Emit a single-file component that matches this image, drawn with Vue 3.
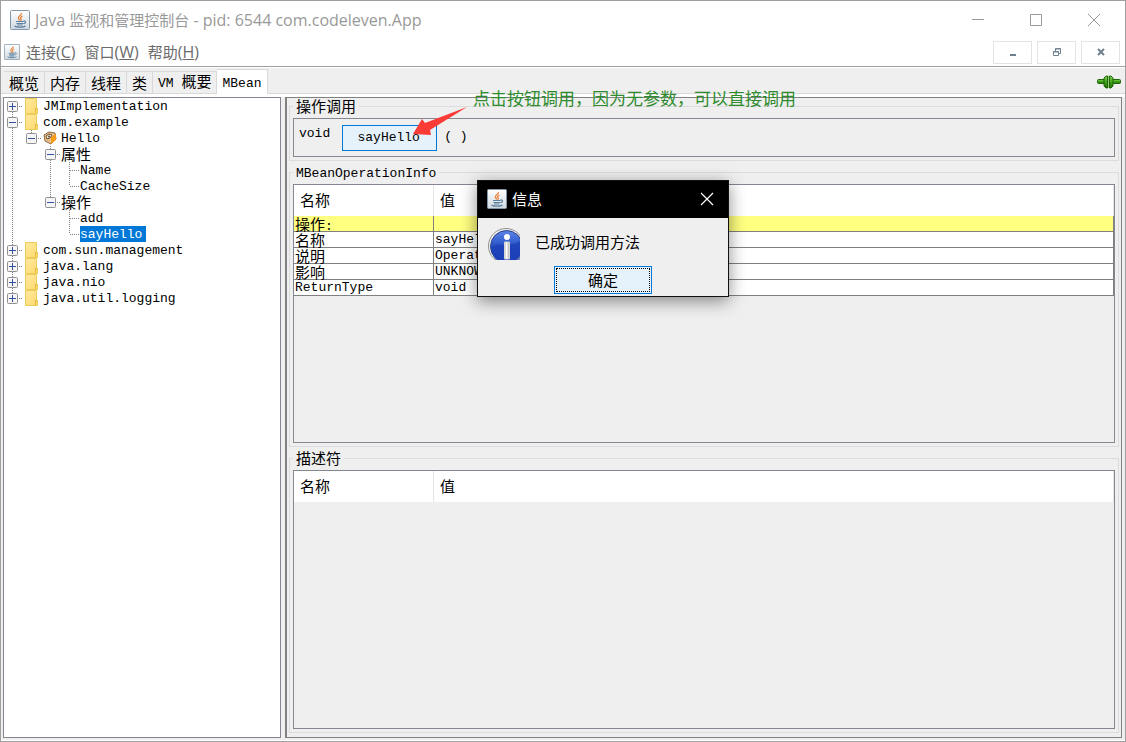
<script setup>
import { ref } from 'vue';

const menus = ref([
  { label: "连接", key: "C" },
  { label: "窗口", key: "W" },
  { label: "帮助", key: "H" }
]);

const tabs = ref([
  { zh: "概览" }, { zh: "内存" }, { zh: "线程" }, { zh: "类" },
  { en: "VM ", zh: "概要" }, { en: "MBean" }
]);
const activeTab = ref(5);

// cells: F = first, T = branch, L = last branch, I = line, _ = empty
const nodes = ref([
  { name: "JMImplementation", cells: "F", box: "+", icon: "folder" },
  { name: "com.example", cells: "T", box: "-", icon: "folder" },
  { name: "Hello", cells: "IL", box: "-", icon: "bean" },
  { name: "属性", cells: "I_T", box: "-", zh: true },
  { name: "Name", cells: "I_IT" },
  { name: "CacheSize", cells: "I_IL" },
  { name: "操作", cells: "I_L", box: "-", zh: true },
  { name: "add", cells: "I__T" },
  { name: "sayHello", cells: "I__L" },
  { name: "com.sun.management", cells: "T", box: "+", icon: "folder" },
  { name: "java.lang", cells: "T", box: "+", icon: "folder" },
  { name: "java.nio", cells: "T", box: "+", icon: "folder" },
  { name: "java.util.logging", cells: "L", box: "+", icon: "folder" }
]);
const selectedNode = ref("sayHello");

const lines = {
  F: "M8.5 8V16M9 8.5H19",
  T: "M8.5 0V16M9 8.5H19",
  L: "M8.5 0V8M9 8.5H19",
  I: "M8.5 0V16",
  _: ""
};

const info = ref([
  { name: "名称", value: "sayHello", zh: true },
  { name: "说明", value: "Operation exposed for management", zh: true },
  { name: "影响", value: "UNKNOWN", zh: true },
  { name: "ReturnType", value: "void" }
]);

const showDialog = ref(true);
</script>

<template>
  <div class="window">
    <svg class="symbols" width="0" height="0" aria-hidden="true">
      <defs>
        <linearGradient id="cupBg" x1="0" y1="0" x2="0" y2="1">
          <stop offset="0" stop-color="#ffffff" />
          <stop offset="1" stop-color="#cfd9e0" />
        </linearGradient>
        <linearGradient id="infoBlue" x1="0" y1="0" x2="0" y2="1">
          <stop offset="0" stop-color="#5d86e8" />
          <stop offset="0.5" stop-color="#2450c4" />
          <stop offset="1" stop-color="#1c3fc4" />
        </linearGradient>
        <linearGradient id="infoStem" x1="0" y1="0" x2="1" y2="0">
          <stop offset="0" stop-color="#b4b4b4" />
          <stop offset="0.4" stop-color="#ffffff" />
          <stop offset="1" stop-color="#a8a8a8" />
        </linearGradient>
        <linearGradient id="plugGreen" x1="0" y1="0" x2="0" y2="1">
          <stop offset="0" stop-color="#86d45a" />
          <stop offset="0.5" stop-color="#3fa516" />
          <stop offset="1" stop-color="#1f7006" />
        </linearGradient>
        <linearGradient id="folderYellow" x1="0" y1="0" x2="1" y2="1">
          <stop offset="0" stop-color="#ffeaa0" />
          <stop offset="1" stop-color="#fbd96c" />
        </linearGradient>
        <symbol id="java" viewBox="0 0 20 20">
          <rect x="0.5" y="0.5" width="19" height="19" rx="1" fill="url(#cupBg)" stroke="#8296a6" />
          <path d="M11.5 3C12 5 8 6 8.4 8C8.6 9 9.5 9.5 9.5 10.5M12.5 6C10.5 7 10 8 11 9C11.5 9.6 11 10.3 10.5 10.7" fill="none" stroke="#e8833a" stroke-width="1.3" />
          <path d="M6 11.5H13.5M6.5 13.5H13M7 15H12.5M13.5 11C16.5 10.5 16 13.5 13.3 13.6M4.5 16C6 17.5 14 17.5 15.5 16" fill="none" stroke="#5b7f9e" stroke-width="1.2" />
        </symbol>
      </defs>
    </svg>

    <header class="title-bar">
      <svg class="app-icon"><use href="#java" /></svg>
      <h1>Java <span>监视和管理控制台</span> - pid: 6544 com.codeleven.App</h1>
      <div class="win-buttons">
        <button aria-label="最小化"><svg width="14" height="14"><path d="M1 6.5H13" /></svg></button>
        <button aria-label="最大化"><svg width="14" height="14"><path d="M1.5 1.5H12.5V12.5H1.5Z" /></svg></button>
        <button aria-label="关闭"><svg width="14" height="14"><path d="M1 1L13 13M13 1L1 13" /></svg></button>
      </div>
    </header>

    <nav class="menu-bar">
      <svg class="menu-icon"><use href="#java" /></svg>
      <button v-for="menu in menus" :key="menu.key" class="menu"><span>{{ menu.label }}</span>(<u>{{ menu.key }}</u>)</button>
      <div class="frame-buttons">
        <button aria-label="最小化内部窗口"><svg width="10" height="10"><path d="M2 8H8" stroke="#70808f" stroke-width="2" /></svg></button>
        <button aria-label="还原内部窗口"><svg width="10" height="10"><path d="M3.5 4V1.5H8.5V6.5H7M3 2H9M1.5 4.5H6.5V8.5H1.5ZM1 5H7" fill="none" stroke="#70808f" /></svg></button>
        <button aria-label="关闭内部窗口"><svg width="10" height="10"><path d="M2 2L8 8M8 2L2 8" stroke="#70808f" stroke-width="2" /></svg></button>
      </div>
    </nav>

    <div class="tab-bar">
      <button
        v-for="(tab, i) in tabs"
        :key="i"
        class="tab"
        :class="{ active: i === activeTab }"
        @click="activeTab = i"
      ><span v-if="tab.en" class="latin">{{ tab.en }}</span>{{ tab.zh }}</button>
      <svg class="plug" width="24" height="14" viewBox="0 0 24 14">
        <rect x="0.5" y="4.5" width="23" height="4" rx="1" fill="url(#plugGreen)" stroke="#21640b" />
        <path d="M7 3L9 1H10.5V13H9L7 11ZM16 3L14 1H12.5V13H14L16 11Z" fill="url(#plugGreen)" stroke="#21640b" />
        <path d="M11.5 1V13" stroke="#8fce6e" />
      </svg>
    </div>

    <main class="content">
      <aside class="tree">
        <div v-for="node in nodes" :key="node.name" class="node">
          <svg v-for="(cell, i) in node.cells" :key="i" class="cell" width="19" height="16">
            <path :d="lines[cell]" fill="none" stroke="#808080" stroke-dasharray="1 1" />
            <g v-if="node.box && i === node.cells.length - 1">
              <rect x="3.5" y="3.5" width="10" height="10" rx="1" fill="#f5f5f5" stroke="#919191" />
              <path d="M5 8.5H12" stroke="#35509c" />
              <path v-if="node.box === '+'" d="M8.5 5V12" stroke="#35509c" />
            </g>
          </svg>
          <svg v-if="node.icon === 'folder'" class="folder" width="14" height="16">
            <path d="M0.5 0.5H11.5V10.5H12.5V15.5H0.5Z" fill="url(#folderYellow)" stroke="#eccb58" />
            <path d="M10.5 15V10.5H12.5" fill="none" stroke="#dfb93b" />
          </svg>
          <svg v-if="node.icon === 'bean'" class="bean" width="14" height="16">
            <path d="M1 5L6 2L12 3L13 9L8 14L2 11Z" fill="#e9c08a" stroke="#8a6a44" />
            <path d="M8 7L13 4V10L8 14Z" fill="#f59b16" />
            <path d="M3 6L6 4L9 5L7 8L4 9Z" fill="#f8ead2" stroke="#6d5335" />
            <circle cx="6" cy="6.5" r="1" fill="#5e4a38" />
          </svg>
          <button
            class="node-name"
            :class="{ latin: !node.zh, selected: node.name === selectedNode }"
            @click="selectedNode = node.name"
          >{{ node.name }}</button>
        </div>
      </aside>

      <section class="details">
        <fieldset class="group">
          <legend>操作调用</legend>
          <div class="call latin">
            <span class="return-type">void</span>
            <button class="invoke latin" @click="showDialog = true">sayHello</button>
            <span class="parens">( )</span>
          </div>
        </fieldset>

        <fieldset class="group fill">
          <legend class="latin">MBeanOperationInfo</legend>
          <div class="table-box">
            <table>
              <thead>
                <tr><th class="name-col">名称</th><th>值</th></tr>
              </thead>
              <tbody>
                <tr class="heading"><td>操作<span class="latin">:</span></td><td></td></tr>
                <tr v-for="row in info" :key="row.name">
                  <td :class="{ latin: !row.zh }">{{ row.name }}</td>
                  <td class="latin">{{ row.value }}</td>
                </tr>
              </tbody>
            </table>
          </div>
        </fieldset>

        <fieldset class="group fill">
          <legend>描述符</legend>
          <div class="table-box">
            <table>
              <thead>
                <tr><th class="name-col">名称</th><th>值</th></tr>
              </thead>
            </table>
          </div>
        </fieldset>
      </section>
    </main>

    <p class="note">点击按钮调用，因为无参数，可以直接调用</p>
    <svg class="arrow" width="54" height="30"><path d="M0 27L9 12L12 16L54 0L17 23L18 28Z" fill="#fb3b36" /></svg>

    <div v-if="showDialog" class="dialog" role="dialog" aria-labelledby="dialogTitle">
      <div class="dialog-title">
        <svg class="app-icon"><use href="#java" /></svg>
        <span id="dialogTitle">信息</span>
        <button class="dialog-close" aria-label="关闭" @click="showDialog = false">
          <svg width="14" height="14"><path d="M1 1L13 13M13 1L1 13" stroke="#fff" stroke-width="1.2" /></svg>
        </button>
      </div>
      <div class="message">
        <svg width="32" height="32" viewBox="0 0 32 32">
          <circle cx="18" cy="18" r="17.5" fill="#f4f4f4" stroke="#8d8d8d" />
          <circle cx="18.5" cy="18.5" r="16" fill="url(#infoBlue)" stroke="#2a3f86" />
          <path d="M4 19C8 14 22 20 32 13V32H8Q3 26 4 19Z" fill="#1a3cb4" opacity="0.6" />
          <circle cx="19" cy="9" r="3" fill="#fff" />
          <path d="M16.5 14H21.5V31H16.5Z" fill="url(#infoStem)" stroke="#d5d5d5" />
        </svg>
        <span>已成功调用方法</span>
      </div>
      <button class="ok" @click="showDialog = false"><span>确定</span></button>
    </div>
  </div>
</template>

<style>
body {
  margin: 0;
  background-color: #efefef;
}
</style>

<style scoped>
* {
  box-sizing: border-box;
}

.window {
  position: relative;
  display: flex;
  flex-direction: column;
  min-height: 100vh;
  border: 1px solid #a0a0a0;
  background-color: #efefef;
  color: #000;
  font-family: "Noto Sans CJK SC", sans-serif;
  font-size: 15px;
  line-height: 16px;
}

button {
  padding: 0;
  border: none;
  background: none;
  color: inherit;
  font: inherit;
}

svg {
  display: block;
  flex: none;
}

.symbols {
  position: absolute;
}

.latin {
  font-family: "Liberation Mono", "Noto Sans CJK SC", monospace;
  font-size: 13px;
}

.title-bar {
  display: flex;
  align-items: center;
  height: 37px;
  padding: 0 2px 0 9px;
  background-color: #fff;
  color: #999;
}

.app-icon {
  width: 20px;
  height: 20px;
}

h1 {
  flex: 1;
  margin: 0 0 0 5px;
  font-family: "Open Sans", "Noto Sans CJK SC", sans-serif;
  font-size: 16px;
  font-weight: normal;
  white-space: nowrap;
}

h1 span,
.menu span {
  font-size: 15px;
}

.win-buttons {
  display: flex;
}

.win-buttons button {
  display: grid;
  place-items: center;
  width: 58px;
  height: 36px;
}

.win-buttons path {
  fill: none;
  stroke: #999;
}

.menu-bar {
  display: flex;
  align-items: center;
  gap: 9px;
  height: 29px;
  padding: 0 5px 0 3px;
  border-bottom: 1px solid #a0a0a0;
  background-color: #fff;
  color: #6b6b6b;
  font-family: "Open Sans", "Noto Sans CJK SC", sans-serif;
  font-size: 16px;
}

.menu-icon {
  width: 16px;
  height: 16px;
  margin-right: -3px;
}

.frame-buttons {
  display: flex;
  gap: 5px;
  margin-left: auto;
}

.frame-buttons button {
  display: grid;
  place-items: center;
  width: 39px;
  height: 23px;
  border: 1px solid #e3e3e3;
}

/* tabs */
.tab-bar {
  display: flex;
  align-items: flex-end;
  height: 30px;
  padding: 0 4px 0 3px;
  border-top: 1px solid #fff;
  border-bottom: 3px solid #fff;
  box-shadow: inset 0 -1px #d9d9d9;
}

.tab {
  height: 22px;
  padding: 0 5px;
  margin-bottom: 1px;
  border-top: 1px solid #d9d9d9;
  border-right: 1px solid #d9d9d9;
  white-space: pre;
}

.tab.active {
  height: 25px;
  margin-bottom: 0;
  background-color: #fff;
}

.plug {
  margin: 0 0 5px auto;
}

/* content */
.content {
  display: flex;
  flex: 1;
  gap: 4px;
  padding: 0 3px 2px 2px;
  border-bottom: 1px solid #fff;
}

.tree {
  flex: none;
  width: 278px;
  border: 1px solid #828790;
  background-color: #fff;
}

.node {
  display: flex;
  align-items: center;
  height: 16px;
}

.folder {
  margin: 0 4px 0 2px;
}

.bean {
  margin: 0 4px 0 1px;
}

.node-name {
  height: 16px;
  line-height: 14px;
}

.node-name.latin {
  line-height: 18px;
}

.node-name.selected {
  padding-right: 4px;
  background-color: #0078d7;
  color: #fff;
}

.details {
  display: flex;
  flex: 1;
  flex-direction: column;
  gap: 3px;
  min-width: 0;
  padding: 0 2px 4px;
  border: 1px solid #828282;
  border-left-width: 2px;
}

.group {
  display: flex;
  flex-direction: column;
  min-width: 0;
  margin: 0;
  padding: 3px;
  border: 1px solid #dcdcdc;
}

.group.fill {
  flex: 1;
}

legend {
  height: 17px;
  padding: 0 3px;
  line-height: 15px;
}

legend.latin {
  line-height: 19px;
}

.call {
  display: flex;
  align-items: flex-start;
  height: 39px;
  padding: 6px 5px;
  border: 1px solid #828790;
}

.return-type {
  line-height: 18px;
}

.invoke {
  width: 95px;
  height: 26px;
  padding-right: 2px;
  margin: 0 7px 0 12px;
  border: 1px solid #0078d7;
  background-color: #e5f1fb;
}

.parens {
  line-height: 24px;
}

.table-box {
  flex: 1;
  border: 1px solid #828790;
}

table {
  width: 100%;
  border-spacing: 0;
  table-layout: fixed;
}

th {
  height: 31px;
  padding: 0 6px 2px;
  border-right: 1px solid #e5e5e5;
  background-color: #fff;
  font-weight: normal;
  text-align: left;
}

.name-col {
  width: 140px;
}

td {
  height: 16px;
  padding: 0 1px;
  border-right: 1px solid #808080;
  border-bottom: 1px solid #808080;
  background-color: #fff;
  line-height: 15px;
  white-space: nowrap;
}

.heading td {
  background-color: #ffff80;
}

.heading span {
  line-height: 0;
}

/* callout and dialog lie over the panels */
.note {
  position: absolute;
  top: 86px;
  left: 472px;
  margin: 0;
  color: #2e8b2e;
  font-size: 17px;
  line-height: 22px;
  white-space: nowrap;
}

.arrow {
  position: absolute;
  top: 106px;
  left: 412px;
}

.dialog {
  position: absolute;
  top: 179px;
  left: 476px;
  display: flex;
  flex-direction: column;
  width: 252px;
  height: 117px;
  border: 1px solid #111;
  background-color: #efefef;
  box-shadow: 0 4px 16px rgba(0, 0, 0, 0.45);
}

.dialog-title {
  display: flex;
  align-items: center;
  gap: 5px;
  height: 37px;
  padding: 0 14px 2px 9px;
  background-color: #000;
  color: #fff;
}

.dialog-close {
  margin-left: auto;
}

.message {
  display: flex;
  gap: 15px;
  padding: 10px 10px 6px;
  line-height: 28px;
}

.ok {
  align-self: center;
  width: 98px;
  height: 28px;
  padding: 1px;
  border: 1px solid #0078d7;
  background-color: #e5f1fb;
}

.ok span {
  display: block;
  border: 1px dotted #000;
  line-height: 22px;
}
</style>
